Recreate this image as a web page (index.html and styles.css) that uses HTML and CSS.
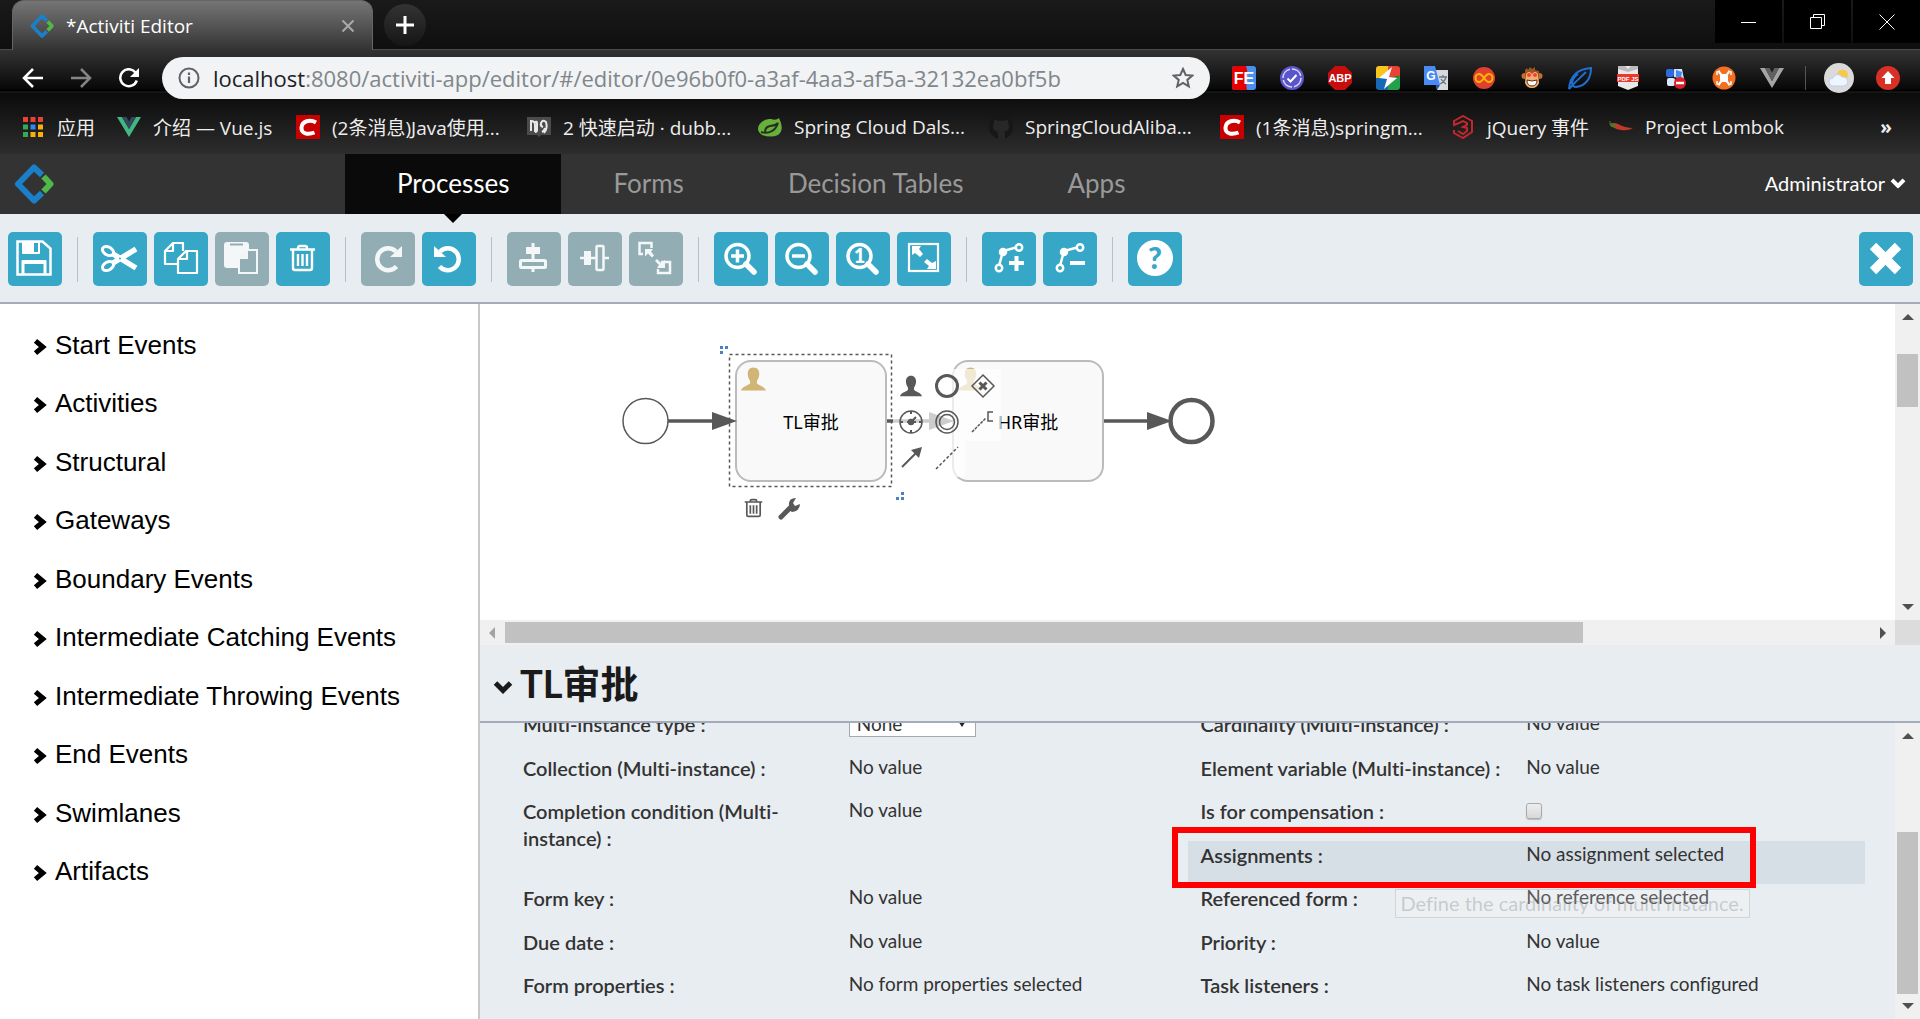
FILE: index.html
```html
<!DOCTYPE html>
<html lang="en">
<head>
<meta charset="utf-8">
<title>Activiti Editor</title>
<link rel="stylesheet" href="styles.css">
</head>
<body>
<svg class="defs" aria-hidden="true">
  <symbol id="logo" viewBox="0 0 40 40">
    <path d="M28 11 20 3.500 4 20 20 36.500 28 29" fill="none" stroke="#1c80c8" stroke-width="6" stroke-linejoin="round"/>
    <path d="M29.500 12.500 36.500 20 29.500 27.500" fill="none" stroke="#50b848" stroke-width="6" stroke-linejoin="round"/>
  </symbol>
  <symbol id="chevron" viewBox="0 0 12 16"><path d="M2 2.500 8.500 8 2 13.500" fill="none" stroke="currentColor" stroke-width="4.500"/></symbol>
  <symbol id="chevron-down" viewBox="0 0 20 14"><path d="M2.500 3 10 10.500 17.500 3" fill="none" stroke="currentColor" stroke-width="5"/></symbol>
  <symbol id="csdn" viewBox="0 0 24 24"><path d="M0 0h24v24H0z" fill="#c80000"/><path d="M20 7.500C14 4 6 6 5.500 12.500 5 19 12 20 18.500 17.500" fill="none" stroke="#fff" stroke-width="4"/></symbol>
  <symbol id="user" viewBox="0 0 26 24"><path d="M13 0c4 0 6 3 6 6.500 0 3-1 5.500-2.500 7.500v2.500c1 2 8 3 9.500 7.500H0c1.500-4.500 8.500-5.500 9.500-7.500V14C8 12 7 9.500 7 6.500 7 3 9 0 13 0z"/></symbol>
  <symbol id="trash" viewBox="0 0 27 28"><path d="M1 5.500h25M9 5V4q0-2 2-2h5q2 0 2 2v1M4 6v18q0 2 2 2h15q2 0 2-2V6M9 10v12M13.500 10v12M18 10v12" fill="none" stroke="currentColor" stroke-width="2.400"/></symbol>
</svg>

<div class="chrome">
  <div class="tabstrip">
    <div class="tab">
      <svg class="favicon"><use href="#logo"/></svg>
      <span class="tab-title">*Activiti Editor</span>
      <button class="plain" aria-label="Close tab"><svg width="14" height="14" viewBox="0 0 14 14"><path d="M1.500 1.500l11 11m0-11l-11 11" stroke="#aaa" stroke-width="2"/></svg></button>
    </div>
    <button class="new-tab" aria-label="New tab"><svg width="18" height="18" viewBox="0 0 18 18"><path d="M9 0v18M0 9h18" stroke="#fff" stroke-width="3"/></svg></button>
    <div class="window-controls">
      <button aria-label="Minimize"><svg width="16" height="16" viewBox="0 0 16 16"><path d="M0 8.500h15" stroke="#fff"/></svg></button>
      <button aria-label="Restore"><svg width="16" height="16" viewBox="0 0 16 16"><path d="M.5 3.500h11v11H.5zM3.500 3.500v-3h11v11h-3" fill="none" stroke="#fff"/></svg></button>
      <button aria-label="Close window"><svg width="16" height="16" viewBox="0 0 16 16"><path d="M.5.5l15 15m0-15l-15 15" stroke="#fff"/></svg></button>
    </div>
  </div>

  <div class="addressbar">
    <div class="history">
      <button class="plain" aria-label="Back"><svg width="22" height="20" viewBox="0 0 22 20"><path d="M21 10H2M11 1l-9 9 9 9" fill="none" stroke="#fff" stroke-width="2.500"/></svg></button>
      <button class="plain" aria-label="Forward"><svg width="22" height="20" viewBox="0 0 22 20"><path d="M1 10h19M11 1l9 9-9 9" fill="none" stroke="#858585" stroke-width="2.500"/></svg></button>
      <button class="plain" aria-label="Reload"><svg width="22" height="20" viewBox="0 0 22 20"><path d="M17.500 4.500A8.500 8.500 0 1 0 18.800 12.500" fill="none" stroke="#fff" stroke-width="2.500"/><path d="M21 0v9h-9z" fill="#fff"/></svg></button>
    </div>
    <div class="omnibox">
      <svg width="22" height="22" viewBox="0 0 22 22"><circle cx="11" cy="11" r="9.500" fill="none" stroke="#5f6368" stroke-width="2"/><path d="M11 9.500V16M11 5.500V8" stroke="#5f6368" stroke-width="2.200"/></svg>
      <span class="url"><b>localhost</b>:8080/activiti-app/editor/#/editor/0e96b0f0-a3af-4aa3-af5a-32132ea0bf5b</span>
      <svg width="22" height="22" viewBox="0 0 22 22"><path d="M11 2l2.700 6 6.600.6-5 4.300 1.500 6.500L11 16l-5.800 3.400 1.500-6.500-5-4.300 6.600-.6z" fill="none" stroke="#5f6368" stroke-width="2"/></svg>
    </div>
    <div class="extensions">
      <svg viewBox="0 0 24 24"><rect width="24" height="24" rx="3" fill="#4a90f0"/><path d="M3 0h11c3 7-1 16 1 24H3q-3 0-3-3V3q0-3 3-3z" fill="#e80000"/><text x="12" y="18" font-size="16" font-weight="700" fill="#fff" text-anchor="middle">FE</text></svg>
      <svg viewBox="0 0 24 24"><circle cx="12" cy="12" r="12" fill="#5a55c8"/><circle cx="12" cy="12" r="9" fill="none" stroke="#d8d6ff" stroke-width="1.500" stroke-dasharray="12 2"/><path d="M7.500 12.500l3 3 6-6.500" fill="none" stroke="#fff" stroke-width="2"/></svg>
      <svg viewBox="0 0 24 24"><path d="M7 0h10l7 7v10l-7 7H7l-7-7V7z" fill="#c70d0d"/><text x="12" y="16" font-size="11" font-weight="700" fill="#fff" text-anchor="middle">ABP</text></svg>
      <svg viewBox="0 0 24 24"><path d="M3 0h9v12H0V3q0-3 3-3z" fill="#f7c51e"/><path d="M12 0h9q3 0 3 3v7L12 12z" fill="#e94335"/><path d="M0 12h12v12H3q-3 0-3-3z" fill="#1769b5"/><path d="M12 12l12-2v11q0 3-3 3h-9z" fill="#22a04a"/><path d="M16 1L3 12l8 1-3 10 13-11-8-1z" fill="#fff"/></svg>
      <svg viewBox="0 0 24 24"><path d="M10 4h14v20H13z" fill="#d6d9de"/><path d="M0 0h11l5 19H0z" fill="#4a8af4"/><path d="M12 19h4l-3 5z" fill="#2555b0"/><text x="7" y="14" font-size="12" font-weight="700" fill="#fff" text-anchor="middle">G</text><path d="M15 11h8M19 9v2M22 11c-1 4-4 6-6 7M17 13c1 2 4 4 5 5" fill="none" stroke="#6a7885" stroke-width="1.300"/></svg>
      <svg viewBox="0 0 24 24"><circle cx="12" cy="12" r="11" fill="#e0402f"/><path d="M12 12c-2-3-3-4-5-4s-3.500 2-3.500 4S5 16 7 16s3-1 5-4 3-4 5-4 3.500 2 3.500 4S19 16 17 16s-3-1-5-4z" fill="none" stroke="#ffb300" stroke-width="2"/></svg>
      <svg viewBox="0 0 24 24"><circle cx="4.500" cy="10" r="3" fill="#c0702f"/><circle cx="19.500" cy="10" r="3" fill="#c0702f"/><path d="M5 4l2-2 1 2 2-3 2 2 3-2v3l4 1v12q-2 5-7 5t-7-5z" fill="#9a5522"/><path d="M6 10h12l1 7q-2 5-7 5t-7-5z" fill="#e8b27d"/><circle cx="9" cy="9" r="2.500" fill="#f3402c" stroke="#ffb27d"/><circle cx="15" cy="9" r="2.500" fill="#f3402c" stroke="#ffb27d"/><path d="M7 14q5 2 10 0 0 6-5 6t-5-6z" fill="#fff" stroke="#6b2d10"/></svg>
      <svg viewBox="0 0 24 24"><path d="M1 23C2 10 10 3 23 2c0 10-5 18-15 19-6 0-5-8 2-13M1 23C8 15 12 12 18 6" fill="none" stroke="#1f6fd1" stroke-width="2"/></svg>
      <svg viewBox="0 0 24 24"><path d="M2 0h20v20l-10 4-10-4z" fill="#e9e9e9"/><path d="M2 0h7l3 3 3-3h7v3l-10 3L2 3z" fill="#bbb"/><path d="M1 8h22v8H1z" fill="#e8392c"/><text x="12" y="15" font-size="6" font-weight="700" fill="#fff" text-anchor="middle">PDF JS</text></svg>
      <svg viewBox="0 0 24 24"><rect x="2" y="3" width="8" height="8" rx="2" fill="#2d6be0"/><path d="M10 3h8l2 10-10-2z" fill="#cfe3ff"/><rect x="3" y="12" width="8" height="8" rx="2" fill="#dbe9fb"/><path d="M12 4l6 2-1 6-5-1z" fill="#4a88ee"/><circle cx="16" cy="17" r="6" fill="#d91e25"/><path d="M12 17h8" stroke="#fff" stroke-width="2.500"/></svg>
      <svg viewBox="0 0 24 24"><circle cx="12" cy="12" r="11.500" fill="#f37021"/><path d="M7 6l10 12M17 6L7 18" stroke="#fff" stroke-width="2"/><rect x="8" y="8" width="8" height="8" rx="2" fill="#fff"/><path d="M5 9V6l3-1M16 5l3 1v3M19 15v3l-3 1M8 19l-3-1v-3" fill="none" stroke="#fff" stroke-width="1.500"/></svg>
      <svg viewBox="0 0 24 24"><path d="M0 2h5l7 13 7-13h5L12 22z" fill="#a5a5a5"/><path d="M5 2h4.500L12 6.500 14.500 2H19l-7 13z" fill="#606060"/></svg>
      <span class="divider"></span>
      <svg class="avatar" viewBox="0 0 30 30"><circle cx="15" cy="15" r="15" fill="#dadada"/><circle cx="18.500" cy="12" r="5.500" fill="#f8c84a"/><path d="M9 23a4 4 0 0 1 0-8 5 5 0 0 1 9-1 4.500 4.500 0 0 1 2 9z" fill="#eef5ff" stroke="#b9d3f2"/></svg>
      <svg class="update" viewBox="0 0 24 24"><circle cx="12" cy="12" r="12" fill="#d93025"/><path d="M12 5l6.500 7H15v6H9v-6H5.500z" fill="#fff"/></svg>
    </div>
  </div>

  <nav class="bookmarks" aria-label="Bookmarks">
    <a href="#"><svg viewBox="0 0 24 24"><g transform="translate(0 2)"><path d="M0 0h5v5H0zM7.500 0h5v5h-5zM15 0h5v5h-5z" fill="#ea4335"/><path d="M0 7.500h5v5H0zM0 15h5v5H0z" fill="#34a853"/><path d="M7.500 7.500h5v5h-5z" fill="#2f86f6"/><path d="M15 7.500h5v5h-5zM7.500 15h5v5h-5zM15 15h5v5h-5z" fill="#fbaf0a"/></g></svg>应用</a>
    <a href="#"><svg viewBox="0 0 24 24"><path d="M0 2h5l7 12 7-12h5L12 22z" fill="#41b883"/><path d="M5 2h4.500L12 6.500 14.500 2H19l-7 12z" fill="#35495e"/></svg>介绍 — Vue.js</a>
    <a href="#"><svg><use href="#csdn"/></svg>(2条消息)Java使用...</a>
    <a href="#"><svg viewBox="0 0 24 24"><path d="M0 2h24v18H14l-2 2-2-2H0z" fill="#4b4b4b"/><path d="M4 16V6q4 0 4 4v7M8 17q2 0 2-2V8q0-2-2-1" fill="none" stroke="#e8e8e8" stroke-width="2"/><path d="M16 12q-3-1-2-4 2-4 5-1 2 6-2 11M15 17q2-1 3-4" fill="none" stroke="#e8e8e8" stroke-width="2"/></svg>2 快速启动 · dubb...</a>
    <a href="#"><svg viewBox="0 0 24 24"><path d="M21 3q6 12-1 17-7 3-16 0-6-4-3-10Q6 3 13 4q5 2 8-1z" fill="#68b03c"/><path d="M3 17q6 2 11-1 4-2 6-8-3 3-8 3-5 1-5 6" fill="none" stroke="#25301e" stroke-width="2"/></svg>Spring Cloud Dals...</a>
    <a href="#"><svg viewBox="0 0 24 24"><circle cx="12" cy="12" r="12" fill="#171717"/><path d="M9 24v-5q-1-1 0-2-5-1-5-5 0-3 1-4 0-2 .5-3.500Q8 5 9 6q3-1 6 0 1-1 3.500-1.500Q19 6 19 8q1 1 1 4 0 4-5 5 1 1 1 2v5z" fill="#272727"/></svg>SpringCloudAliba...</a>
    <a href="#"><svg><use href="#csdn"/></svg>(1条消息)springm...</a>
    <a href="#"><svg viewBox="0 0 24 24"><path d="M8 8L3 10V6l9-5 9 5v11l-9 6-9-5v-3" fill="none" stroke="#c1272d" stroke-width="2"/><path d="M8 8l4-2 4 2v2l-4 2 4 1v3l-4 3-5-3" fill="none" stroke="#c1272d" stroke-width="2"/></svg>jQuery 事件</a>
    <a href="#"><svg viewBox="0 0 24 24"><path d="M1 9q4-2 8 0 7 4 15 4-5 3-12 2-8-1-11-6z" fill="#c0392b"/><path d="M1 9q4-1 6 2-3 2-5 0zM1 9V6" fill="#4d7a25" stroke="#4d7a25"/></svg>Project Lombok</a>
    <button class="plain more" aria-label="More bookmarks">»</button>
  </nav>
</div>

<header class="app-header">
  <a class="brand" href="#" aria-label="Activiti"><svg width="40" height="40"><use href="#logo"/></svg></a>
  <nav class="main-nav">
    <a class="active" href="#">Processes</a>
    <a href="#">Forms</a>
    <a href="#">Decision Tables</a>
    <a href="#">Apps</a>
  </nav>
  <button class="plain account">Administrator <svg width="16" height="12" viewBox="0 0 20 14"><use href="#chevron-down"/></svg></button>
</header>

<div class="toolbar">
  <button class="tool" aria-label="Save"><svg viewBox="0 0 54 54"><path d="M9.500 9.500h25l8 7v26h-33z" fill="none" stroke="#fff" stroke-width="2.500"/><path d="M14 9h18v12q0 1-1 1H15q-1 0-1-1z" fill="#fff"/><path d="M26 11h4v9h-4z" fill="#36a7c7"/><path d="M15 43V30h22v13" fill="none" stroke="#fff" stroke-width="3"/><path d="M14 28h24v4H14z" fill="#fff"/></svg></button>
  <span class="sep"></span>
  <div class="tool-group">
    <button class="tool" aria-label="Cut"><svg viewBox="0 0 54 54" fill="none" stroke="#fff"><ellipse cx="15" cy="19" rx="6" ry="4" transform="rotate(30 15 19)" stroke-width="3"/><ellipse cx="15" cy="34" rx="6" ry="4" transform="rotate(-30 15 34)" stroke-width="3"/><path d="M20 22l23 14M20 31l23-14" stroke-width="5.500"/><circle cx="27" cy="26.500" r="1" fill="#36a7c7" stroke="none"/></svg></button>
    <button class="tool" aria-label="Copy"><svg viewBox="0 0 54 54" fill="none" stroke="#fff" stroke-width="2.200" stroke-linejoin="round"><path d="M24 32H11V19l8-8h10v8M11 19h8v-8"/><path d="M24 41V27l8-8h11v22zM24 27h9v-8"/></svg></button>
    <button class="tool" aria-label="Paste" disabled><svg viewBox="0 0 54 54"><rect x="9" y="10" width="25" height="26" rx="3" fill="#f4f7f8"/><path d="M15 12.500h13" stroke="#93adb5" stroke-width="2"/><path d="M24 41V26l8-8h10v23z" fill="#93adb5" stroke="#f4f7f8" stroke-width="2"/><path d="M24 27h9v-9z" fill="#f4f7f8"/></svg></button>
    <button class="tool" aria-label="Delete"><svg viewBox="0 0 54 54"><use href="#trash" x="13" y="12" width="27" height="28"/></svg></button>
  </div>
  <span class="sep"></span>
  <div class="tool-group">
    <button class="tool" aria-label="Redo" disabled><svg viewBox="0 0 54 54"><path d="M35 19.500A11 11 0 1 0 35.500 34.500" fill="none" stroke="#f4f7f8" stroke-width="4.500"/><path d="M41 14v11H29z" fill="#f4f7f8"/></svg></button>
    <button class="tool" aria-label="Undo"><svg viewBox="0 0 54 54"><path d="M18 19.500A11 11 0 1 1 17.500 34.500" fill="none" stroke="#fff" stroke-width="4.500"/><path d="M12 14v11h12z" fill="#fff"/></svg></button>
  </div>
  <span class="sep"></span>
  <div class="tool-group">
    <button class="tool" aria-label="Align vertical" disabled><svg viewBox="0 0 54 54"><path d="M26 11v29" stroke="#f4f7f8" stroke-width="3"/><rect x="19" y="15" width="14" height="7" fill="#f4f7f8"/><rect x="13.500" y="28.500" width="25" height="7" rx="1" fill="#93adb5" stroke="#f4f7f8" stroke-width="3"/></svg></button>
    <button class="tool" aria-label="Align horizontal" disabled><svg viewBox="0 0 54 54"><path d="M12 26h29" stroke="#f4f7f8" stroke-width="2.500"/><rect x="16" y="19" width="7" height="14" fill="#f4f7f8"/><rect x="28.500" y="14" width="7" height="24" rx="1" fill="#93adb5" stroke="#f4f7f8" stroke-width="2.500"/></svg></button>
    <button class="tool" aria-label="Same size" disabled><svg viewBox="0 0 54 54"><path d="M14 22h-3.500V11h12v5M32 30h9v11H29v-4" fill="none" stroke="#f4f7f8" stroke-width="2.500"/><path d="M16 17h8l-2 2.500 3 4-2 2-4-4-3 3zM36 36h-8l2-3-4-4 2-2 4 4 4-3z" fill="#f4f7f8"/></svg></button>
  </div>
  <span class="sep"></span>
  <div class="tool-group">
    <button class="tool" aria-label="Zoom in"><svg viewBox="0 0 54 54" fill="none" stroke="#fff"><circle cx="23.500" cy="24" r="11.500" stroke-width="3.500"/><path d="M32 32l8 8" stroke-width="5.500" stroke-linecap="round"/><path d="M17 24h13M23.500 17.500v13" stroke-width="3.500"/></svg></button>
    <button class="tool" aria-label="Zoom out"><svg viewBox="0 0 54 54" fill="none" stroke="#fff"><circle cx="23.500" cy="24" r="11.500" stroke-width="3.500"/><path d="M32 32l8 8" stroke-width="5.500" stroke-linecap="round"/><path d="M17 24h13" stroke-width="3.500"/></svg></button>
    <button class="tool" aria-label="Actual size"><svg viewBox="0 0 54 54" fill="none" stroke="#fff"><circle cx="23.500" cy="24" r="11.500" stroke-width="3.500"/><path d="M32 32l8 8" stroke-width="5.500" stroke-linecap="round"/><text x="23.500" y="31" font-size="20" font-weight="900" fill="#fff" stroke="none" text-anchor="middle">1</text></svg></button>
    <button class="tool" aria-label="Zoom to fit"><svg viewBox="0 0 54 54"><rect x="12" y="12" width="29" height="27" fill="none" stroke="#fff" stroke-width="2.200"/><path d="M15 14h9l-2 3 4 5-3 3-5-4-3 2zM39 37h-9l2-3-5-4 3-3 5 4 4-2z" fill="#fff"/></svg></button>
  </div>
  <span class="sep"></span>
  <div class="tool-group">
    <button class="tool" aria-label="Add bend point"><svg viewBox="0 0 54 54" fill="none" stroke="#fff" stroke-width="2.500"><path d="M17 34l4-15 15-4"/><circle cx="17" cy="36" r="3.200" fill="#36a7c7"/><circle cx="37" cy="15.500" r="3.200" fill="#36a7c7"/><circle cx="21" cy="20" r="3" fill="#fff"/><path d="M27 31h15M34.500 24v15" stroke-width="4"/></svg></button>
    <button class="tool" aria-label="Remove bend point"><svg viewBox="0 0 54 54" fill="none" stroke="#fff" stroke-width="2.500"><path d="M17 34l4-15 15-4"/><circle cx="17" cy="36" r="3.200" fill="#36a7c7"/><circle cx="37" cy="15.500" r="3.200" fill="#36a7c7"/><circle cx="21" cy="20" r="3" fill="#fff"/><path d="M27 31h15" stroke-width="4"/></svg></button>
  </div>
  <span class="sep"></span>
  <button class="tool" aria-label="Help"><svg viewBox="0 0 54 54"><circle cx="27" cy="26" r="18" fill="#fff"/><text x="27" y="37" font-size="30" font-weight="900" fill="#36a7c7" text-anchor="middle">?</text></svg></button>
  <button class="tool close-editor" aria-label="Close editor"><svg viewBox="0 0 54 54"><path d="M14 14l25 25M39 14L14 39" stroke="#fff" stroke-width="9"/></svg></button>
</div>

<main class="workspace">
  <ul class="palette">
    <li><a href="#"><svg><use href="#chevron"/></svg>Start Events</a></li>
    <li><a href="#"><svg><use href="#chevron"/></svg>Activities</a></li>
    <li><a href="#"><svg><use href="#chevron"/></svg>Structural</a></li>
    <li><a href="#"><svg><use href="#chevron"/></svg>Gateways</a></li>
    <li><a href="#"><svg><use href="#chevron"/></svg>Boundary Events</a></li>
    <li><a href="#"><svg><use href="#chevron"/></svg>Intermediate Catching Events</a></li>
    <li><a href="#"><svg><use href="#chevron"/></svg>Intermediate Throwing Events</a></li>
    <li><a href="#"><svg><use href="#chevron"/></svg>End Events</a></li>
    <li><a href="#"><svg><use href="#chevron"/></svg>Swimlanes</a></li>
    <li><a href="#"><svg><use href="#chevron"/></svg>Artifacts</a></li>
  </ul>

  <section class="editor">
    <div class="canvas">
      <svg class="diagram" role="img" aria-label="Process diagram">
        <g transform="translate(-480 -304)">
          <g fill="none" stroke="#585858">
            <circle cx="645.500" cy="421" r="22.500" stroke-width="1.500"/>
            <path d="M668 421h46M886 421h46M1103 421h46" stroke-width="3.500"/>
            <circle cx="1191.500" cy="421" r="21" stroke-width="4.500"/>
          </g>
          <g fill="#f9f9f9" stroke="#bbb" stroke-width="2">
            <rect x="736" y="361" width="150" height="120" rx="15"/>
            <rect x="953" y="361" width="150" height="120" rx="15"/>
          </g>
          <path d="M712 412l25 9-25 9zM929 412l25 9-25 9zM1147 412l25 9-25 9z" fill="#585858"/>
          <g fill="#d1b575"><use href="#user" x="741" y="367" width="25" height="24"/><use href="#user" x="958" y="367" width="25" height="24"/></g>
          <g class="task-name"><text x="811" y="429">TL审批</text><text x="1028" y="429">HR审批</text></g>
          <rect x="729.500" y="354.500" width="162" height="132" fill="none" stroke="#555" stroke-width="1.500" stroke-dasharray="3 3"/>
          <path d="M720 346h3v3h-3zM725 346h3v3h-3zM720 351h3v3h-3zM901 492h3v3h-3zM896 497h3v3h-3zM901 497h3v3h-3z" fill="#4a80c4"/>
          <path d="M893 369h108v72h-36v36h-72z" fill="#fff" opacity=".7"/>
          <g fill="none" stroke="#585858" stroke-width="1.500">
            <use href="#user" x="900" y="375" width="22" height="22" fill="#585858" stroke="none"/>
            <circle cx="947" cy="386" r="10.500" stroke-width="3"/>
            <path d="M983 375l11 11-11 11-11-11z"/><path d="M979.500 382.500l7 7m0-7l-7 7" stroke-width="3"/>
            <circle cx="911" cy="422" r="11"/><path d="M911 411v3M911 430v3M900 422h3M919 422h3M911 422l5-5M907 422h9" stroke-width="2"/><circle cx="911" cy="422" r="2.500" fill="#585858"/>
            <circle cx="947" cy="422" r="11"/><circle cx="947" cy="422" r="7.500"/>
            <path d="M972 432l14-14" stroke-dasharray="3 1"/><path d="M993 412h-5v9h5"/>
            <path d="M902 467l15-15" stroke-width="2"/><path d="M922 447l-3 11-8-8z" fill="#585858" stroke="none"/>
            <path d="M936 469l22-22" stroke-dasharray="3 2"/>
            <path d="M781 517l9-9" stroke-width="5" stroke-linecap="round"/>
          </g>
          <path d="M796 498q-8 0-7 8-2 4 3 6 8-1 8-8l-5 2-2-3z" fill="#585858"/>
          <use class="trash-dark" href="#trash" x="744" y="498" width="19" height="20"/>
        </g>
      </svg>
      <div class="vscroll canvas-v"><i class="up"></i><i class="thumb"></i><i class="down"></i></div>
      <div class="hscroll"><i class="left"></i><div class="track"><i class="thumb"></i></div><i class="right"></i></div>
      <div class="corner"></div>
    </div>

    <h2 class="panel-title"><svg width="20" height="14"><use href="#chevron-down"/></svg>TL审批</h2>

    <div class="panel">
      <div class="properties">
        <div class="prop"><label class="name" for="mi-type">Multi-instance type :</label><span class="value"><span class="select-box"><select id="mi-type"><option>None</option></select></span></span></div>
        <div class="prop"><span class="name">Cardinality (Multi-instance) :</span><span class="value">No value</span></div>
        <div class="prop"><span class="name">Collection (Multi-instance) :</span><span class="value">No value</span></div>
        <div class="prop"><span class="name">Element variable (Multi-instance) :</span><span class="value">No value</span></div>
        <div class="prop tall"><span class="name">Completion condition (Multi-instance) :</span><span class="value">No value</span></div>
        <div class="prop"><label class="name" for="compensation">Is for compensation :</label><span class="value"><input id="compensation" type="checkbox"></span></div>
        <div class="prop hovered"><span class="name">Assignments :</span><span class="value">No assignment selected</span><span class="callout"></span></div>
        <div class="prop"><span class="name">Form key :</span><span class="value">No value</span></div>
        <div class="prop"><span class="name">Referenced form :</span><span class="value">No reference selected</span><span class="tooltip">Define the cardinality of multi instance.</span></div>
        <div class="prop"><span class="name">Due date :</span><span class="value">No value</span></div>
        <div class="prop"><span class="name">Priority :</span><span class="value">No value</span></div>
        <div class="prop"><span class="name">Form properties :</span><span class="value">No form properties selected</span></div>
        <div class="prop"><span class="name">Task listeners :</span><span class="value">No task listeners configured</span></div>
      </div>
      <div class="vscroll panel-v"><i class="up"></i><i class="thumb"></i><i class="down"></i></div>
    </div>
  </section>
</main>
</body>
</html>
```

FILE: styles.css
```css
* { box-sizing: border-box; }

body {
  margin: 0;
  height: 100vh;
  display: flex;
  flex-direction: column;
  overflow: hidden;
  background: #fff;
  font-family: Lato, "Noto Sans CJK SC", sans-serif;
  font-variant-ligatures: none;
}

a { color: inherit; text-decoration: none; }
button { border: 0; padding: 0; font: inherit; color: inherit; }
svg { display: block; flex: none; }
.defs { display: none; }
.plain { background: none; display: flex; align-items: center; }

/* Browser chrome */
.chrome {
  color: #eee;
  font-family: "Open Sans", "Noto Sans CJK SC", sans-serif;
}
.tabstrip {
  height: 50px;
  display: flex;
  align-items: flex-start;
  padding-left: 12px;
  background: linear-gradient(#1a1a1a, #0f0f0f);
  border-bottom: 1px solid #4a4a4a;
}
.tab {
  width: 361px;
  height: 50px;
  display: flex;
  align-items: center;
  gap: 12px;
  padding: 0 17px;
  border: 1px solid #666;
  border-bottom: 0;
  border-radius: 12px 12px 0 0;
  background: linear-gradient(#757575, #555 50%, #333);
  color: #fff;
  font-size: 19px;
}
.favicon { width: 24px; height: 24px; }
.tab-title { flex: 1; }
.new-tab {
  width: 42px;
  height: 42px;
  margin: 4px 0 0 11px;
  display: flex;
  align-items: center;
  justify-content: center;
  border-radius: 50%;
  background: linear-gradient(#333, #161616);
}
.window-controls { margin-left: auto; display: flex; gap: 2px; }
.window-controls button {
  width: 67px;
  height: 43px;
  display: flex;
  align-items: center;
  justify-content: center;
  background: #000;
}

.addressbar {
  display: flex;
  align-items: center;
  padding: 7px 20px 0 22px;
  background: linear-gradient(#333, #080808 39px, #000 40px, #000 41px, #222 42px, #0b0b0b 43px, #0e0e0e);
}
.history { display: flex; gap: 26px; width: 140px; }
.omnibox {
  flex: 1;
  height: 42px;
  display: flex;
  align-items: center;
  gap: 13px;
  padding: 0 16px;
  border-radius: 21px;
  background: #f1f3f4;
}
.url { flex: 1; color: #80868b; font-size: 22px; white-space: nowrap; }
.url b { font-weight: 400; color: #202124; }
.extensions { display: flex; align-items: center; gap: 24px; margin-left: 22px; font-family: "Liberation Sans", sans-serif; }
.extensions svg { width: 24px; height: 24px; }
.extensions .avatar { width: 30px; height: 30px; margin: 0 -6px; }
.extensions .update { margin-left: 4px; }
.divider { width: 1px; height: 24px; margin-left: -3px; background: #555; }

.bookmarks {
  height: 55px;
  display: grid;
  grid-template-columns: 94px 179px repeat(5, 231px) 158px 1fr auto;
  align-items: center;
  padding: 0 28px 0 23px;
  background: linear-gradient(#0e0e0e, #2d2d2d);
  font-size: 19px;
  white-space: nowrap;
}
.bookmarks a { display: flex; align-items: center; gap: 12px; }
.bookmarks a:first-child { gap: 10px; }
.bookmarks svg { width: 24px; height: 24px; }
.more { font-weight: 700; }

/* Application header */
.app-header {
  height: 60px;
  display: flex;
  align-items: stretch;
  padding: 0 14px;
  background: #333;
}
.brand { width: 331px; display: flex; align-items: center; }
.main-nav { flex: 1; display: flex; font-size: 26px; color: #999; }
.main-nav a { display: flex; align-items: center; padding: 0 52px 3px; }
.main-nav .active { position: relative; background: #0a0a0a; color: #fff; }
.main-nav .active::after {
  content: "";
  position: absolute;
  top: 100%;
  left: 50%;
  margin-left: -9px;
  border: 9px solid transparent;
  border-top-color: #000;
  border-bottom: 0;
}
.account { gap: 5px; padding-bottom: 2px; color: #fff; font-size: 20px; }

/* Toolbar */
.toolbar {
  height: 90px;
  display: flex;
  align-items: center;
  padding: 2px 7px 0 8px;
  background: #e8edf1;
  border-bottom: 2px solid #a4acb9;
}
.tool-group { display: flex; gap: 7px; }
.tool { width: 54px; height: 54px; border-radius: 5px; background: #36a7c7; color: #fff; }
.tool:disabled { background: #93adb5; }
.sep { width: 1px; height: 45px; margin: 0 15px; background: #b8bfc9; }
.close-editor { margin-left: auto; }

/* Workspace */
.workspace { flex: 1; min-height: 0; display: flex; }
.palette {
  flex: 0 0 25%;
  margin: 0;
  padding: 12px 0 0 33px;
  list-style: none;
  border-right: 2px solid #c7cacd;
  color: #000;
  font-family: "Liberation Sans", sans-serif;
  font-size: 26px;
  display: grid;
  grid-auto-rows: 58px 59px;
}
.palette a { height: 58px; display: flex; align-items: center; gap: 8px; }
.palette svg { width: 14px; height: 18px; margin-top: 3px; }

.editor { flex: 1; min-width: 0; display: flex; flex-direction: column; }
.canvas {
  flex: 341 1 0;
  min-height: 0;
  display: grid;
  grid-template: 1fr 25px / 1fr 25px;
}
.diagram { width: 100%; height: 100%; }
.task-name {
  font-family: "Noto Sans", "Noto Sans CJK SC", sans-serif;
  font-size: 18px;
  text-anchor: middle;
}
.trash-dark { color: #585858; }

/* Scroll bars */
.vscroll {
  width: 25px;
  display: flex;
  flex-direction: column;
  align-items: center;
  padding: 10px 0;
  background: #f0f0f0;
}
.vscroll .thumb { width: 21px; background: #c1c1c1; }
.canvas-v .thumb { height: 53px; margin-top: 34px; }
.panel-v .thumb { flex: 1; margin: 93px 0 9px; }
.up, .down { border: 6px solid transparent; }
.up { border-bottom-color: #505050; border-top: 0; }
.down { border-top-color: #505050; border-bottom: 0; }
.canvas-v .down { margin-top: auto; }
.hscroll { display: flex; align-items: center; gap: 10px; padding: 0 9px; background: #f0f0f0; }
.track { flex: 1; display: flex; }
.hscroll .thumb { width: 79%; height: 21px; background: #c1c1c1; }
.left, .right { border: 6px solid transparent; }
.left { border-right-color: #a3a3a3; border-left: 0; }
.right { border-left-color: #505050; border-right: 0; }
.corner { background: #dcdcdc; }

/* Properties panel */
.panel-title {
  margin: 0;
  height: 78px;
  display: flex;
  align-items: center;
  gap: 7px;
  padding: 0 13px;
  background: #e8edf1;
  border-bottom: 2px solid #a4acb9;
  color: #1a1a1a;
  font-size: 38px;
  line-height: 48px;
}
.panel-title svg { margin-top: 8px; }
.panel {
  flex: 296 1 0;
  min-height: 0;
  display: flex;
  overflow: hidden;
  background: #e8edf1;
  color: #333;
}
.properties {
  flex: 1;
  display: grid;
  grid-template-columns: 1fr 1fr;
  grid-auto-rows: 44px 43px;
  margin-top: -13px;
  padding: 0 30px;
}
.prop { position: relative; display: flex; align-items: flex-start; }
.tall { grid-row: span 2; }
.hovered { background: #d6dee6; }
.name { width: 50%; padding: 1px 0 0 13px; font-size: 20px; font-weight: 600; line-height: 27px; }
.value { flex: 1; font-size: 19px; line-height: 25px; }
.select-box { position: relative; display: block; width: 127px; }
.select-box::after {
  content: "";
  position: absolute;
  right: 10px;
  top: 11px;
  border: 4px solid transparent;
  border-top: 6px solid #222;
  border-bottom: 0;
  pointer-events: none;
}
.value select {
  appearance: none;
  display: block;
  width: 100%;
  height: 27px;
  padding: 0 7px;
  border: 1px solid #a9a9a9;
  border-radius: 0;
  background: #fff;
  color: #333;
  font: inherit;
}
.value input {
  appearance: none;
  display: block;
  width: 16px;
  height: 16px;
  margin: 6px 0;
  border: 1px solid #aaa;
  border-radius: 3px;
  background: linear-gradient(#eee, #d8d8d8);
  box-shadow: 0 1px 1px #bbb;
}
.callout {
  position: absolute;
  z-index: 1;
  left: -16px;
  top: -14px;
  width: 584px;
  height: 61px;
  border: 6px solid #f00;
}
.tooltip {
  position: absolute;
  left: 207px;
  top: 5px;
  padding: 0 5px;
  border: 1px solid rgba(150, 150, 150, .3);
  background: rgba(255, 255, 255, .2);
  color: rgba(130, 130, 130, .35);
  font-size: 20px;
  line-height: 27px;
  white-space: nowrap;
}
```
